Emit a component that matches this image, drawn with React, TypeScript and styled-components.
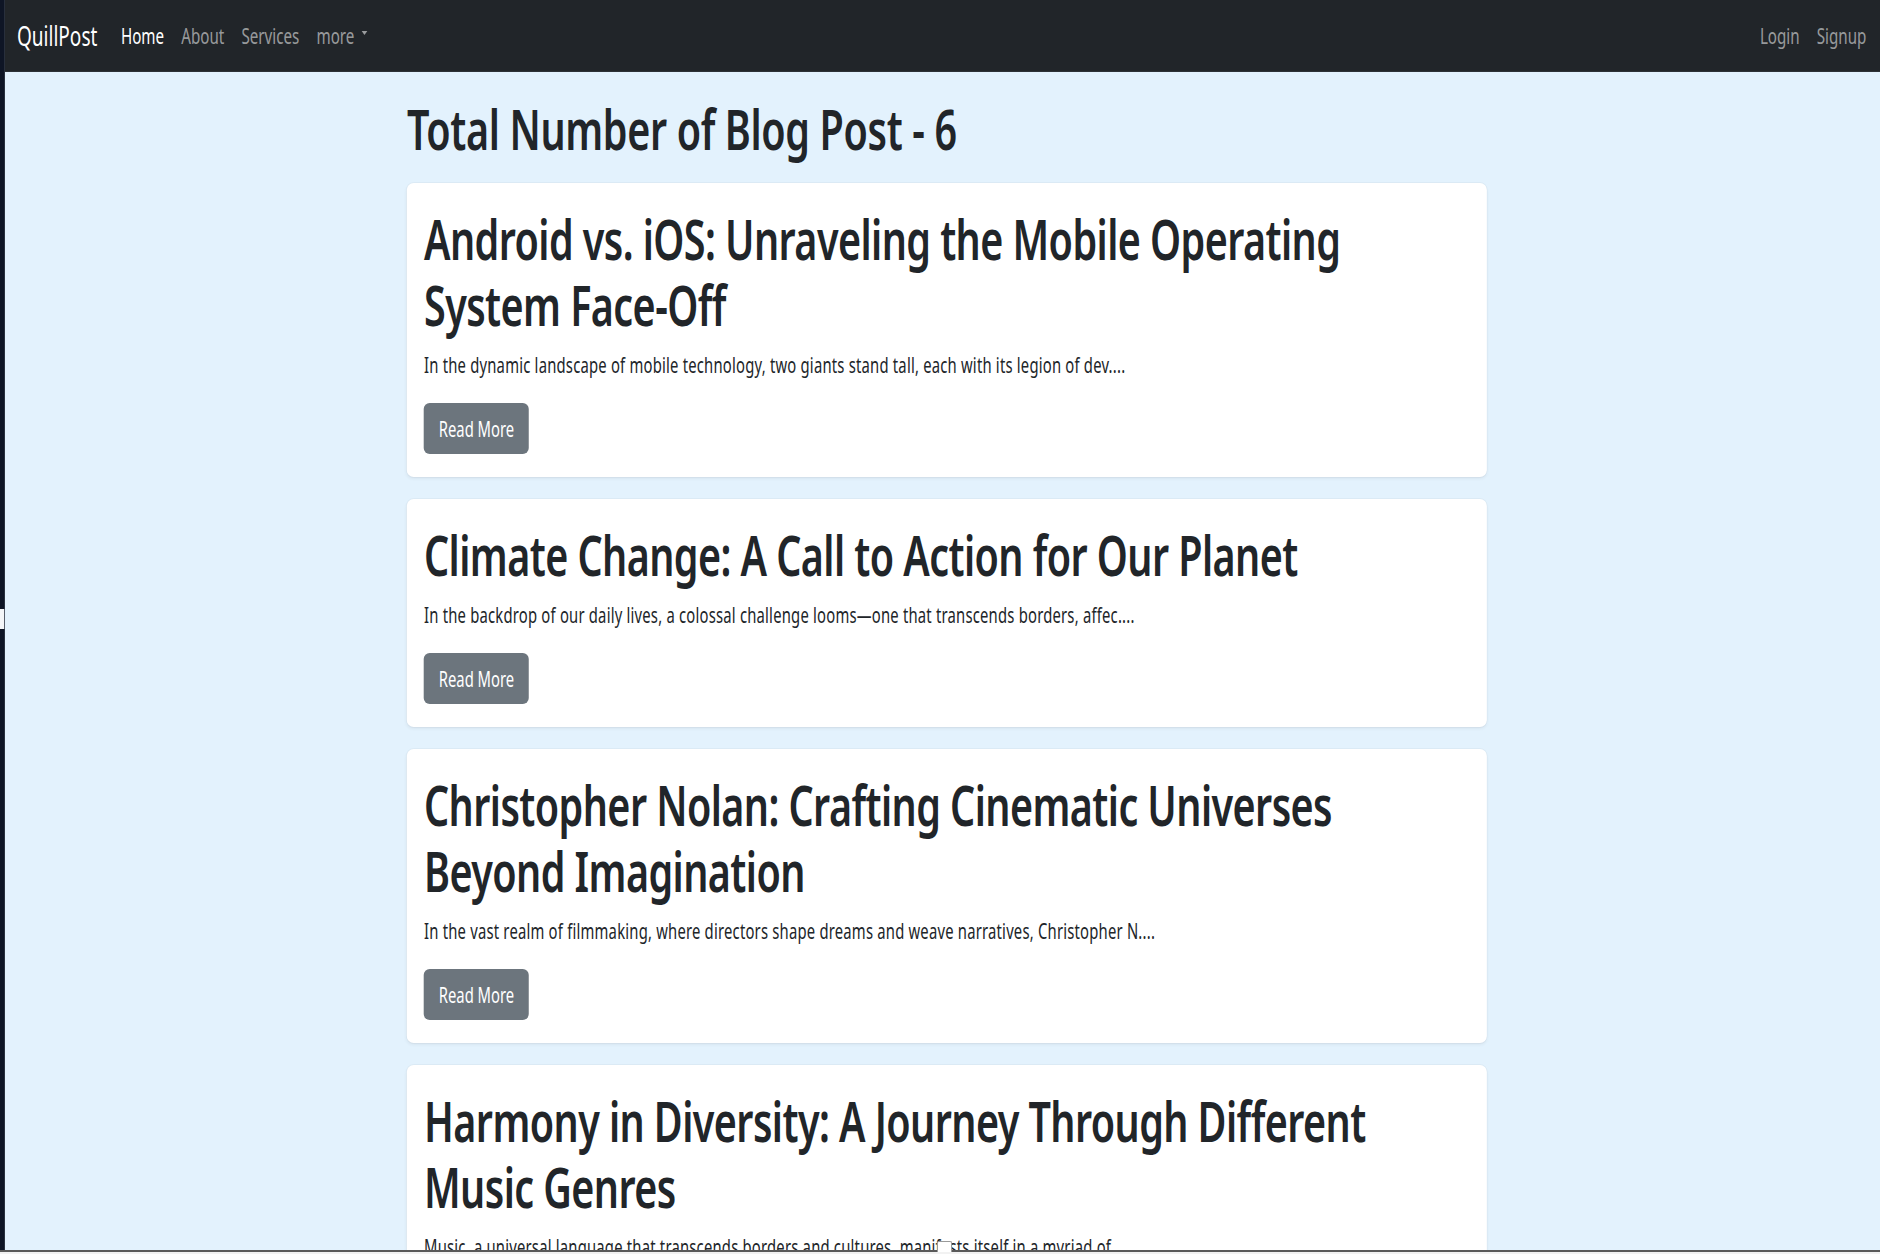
import React from "react";
import styled, { createGlobalStyle } from "styled-components";

/* The reference is a horizontally condensed rendering of the page:
   the page is laid out in a wider coordinate space and squeezed on X. */
const SQUEEZE = 0.705;
const x = (n: number) => `${(n / SQUEEZE).toFixed(2)}px`;

const GlobalStyle = createGlobalStyle`
  html, body {
    margin: 0;
    padding: 0;
    background: #e3f2fd;
    overflow: hidden;
  }
  body {
    font-family: "Noto Sans", "Open Sans", sans-serif;
    color: #212529;
  }
  * { box-sizing: border-box; }
`;

const Viewport = styled.div`
  width: ${x(1880)};
  transform: scaleX(${SQUEEZE});
  transform-origin: 0 0;
`;

const Frame = styled.div`
  display: flex;
  min-height: 1254px;
`;

const EdgeStrip = styled.div`
  width: ${x(5)};
  flex-shrink: 0;
  background: #0e1525;
  display: flex;
  flex-direction: column;
  padding-top: 609px;
`;

const EdgeTick = styled.div`
  width: ${x(4)};
  height: 20px;
  background: #f4f6f8;
`;

const Screen = styled.div`
  flex: 1;
  display: flex;
  flex-direction: column;
  background: #e3f2fd;
`;

const NavBar = styled.nav`
  height: 72px;
  background: #212529;
  display: flex;
  align-items: center;
  padding: 0 ${x(5)} 0 ${x(12)};
  border-bottom: 1px solid #2c3136;
`;

const Brand = styled.a`
  font-size: 27px;
  color: #fff;
  text-decoration: none;
  margin-right: ${x(15)};
`;

const NavList = styled.ul`
  display: flex;
  align-items: center;
  list-style: none;
  margin: 0;
  padding: 0;
`;

const RightList = styled(NavList)`
  margin-left: auto;
`;

const NavLink = styled.a<{ $active?: boolean }>`
  display: flex;
  align-items: center;
  gap: ${x(7)};
  padding: 0 ${x(8.6)};
  font-size: 21.5px;
  color: ${(p) => (p.$active ? "#ffffff" : "rgba(255,255,255,0.55)")};
  text-decoration: none;
`;

const Caret = styled.span`
  width: 0;
  height: 0;
  border-left: ${x(3.5)} solid transparent;
  border-right: ${x(3.5)} solid transparent;
  border-top: 4px solid currentColor;
  margin-top: -6px;
`;

const Main = styled.main`
  padding-left: ${x(9)};
`;

const Container = styled.div`
  width: ${x(1080)};
  margin: 0 auto;
  padding-top: 23px;
  display: flex;
  flex-direction: column;
  gap: 22px;
`;

const PageTitle = styled.h1`
  margin: 0;
  font-size: 56px;
  line-height: 66px;
  font-weight: 600;
  letter-spacing: -0.5px;
  color: #212529;
`;

const Card = styled.article`
  background: #fff;
  border-radius: ${x(7)} / 7px;
  box-shadow: 0 0 0 1px rgba(0, 0, 0, 0.03), 0 2px 4px rgba(0, 0, 0, 0.05);
  padding: 22px ${x(17)} 23px;
  display: flex;
  flex-direction: column;
  align-items: flex-start;
`;

const CardTitle = styled.h2`
  margin: 0;
  font-size: 56px;
  line-height: 66px;
  font-weight: 600;
  letter-spacing: -0.8px;
  color: #212529;
  max-width: ${x(975)};
`;

const Excerpt = styled.p`
  margin: 13px 0 23px;
  font-size: 21px;
  line-height: 30px;
  letter-spacing: 0.3px;
  color: #212529;
`;

const ReadMore = styled.a`
  display: inline-flex;
  align-items: center;
  justify-content: center;
  width: ${x(105)};
  height: 51px;
  border-radius: ${x(6)} / 6px;
  background: #6c757d;
  color: #fff;
  font-size: 21px;
  text-decoration: none;
  white-space: nowrap;
`;

const BottomEdge = styled.div`
  position: fixed;
  left: 0;
  right: 0;
  bottom: 0;
  height: 4px;
  background: #f2f2f2;
  border-top: 2px solid #5a5a5a;
`;

const Grip = styled.div`
  position: fixed;
  left: 937px;
  bottom: 2px;
  width: 15px;
  height: 11px;
  background: #fff;
  border: 1px solid #9a9a9a;
  border-bottom: none;
  border-radius: 2px 2px 0 0;
`;

const posts = [
  {
    title: "Android vs. iOS: Unraveling the Mobile Operating System Face-Off",
    excerpt:
      "In the dynamic landscape of mobile technology, two giants stand tall, each with its legion of dev....",
  },
  {
    title: "Climate Change: A Call to Action for Our Planet",
    excerpt:
      "In the backdrop of our daily lives, a colossal challenge looms\u2014one that transcends borders, affec....",
  },
  {
    title: "Christopher Nolan: Crafting Cinematic Universes Beyond Imagination",
    excerpt:
      "In the vast realm of filmmaking, where directors shape dreams and weave narratives, Christopher N....",
  },
  {
    title: "Harmony in Diversity: A Journey Through Different Music Genres",
    excerpt:
      "Music, a universal language that transcends borders and cultures, manifests itself in a myriad of....",
  },
  {
    title: "The Art of Mindful Living",
    excerpt: "In a world that moves at breakneck speed, mindfulness offers....",
  },
  {
    title: "Exploring the Cosmos",
    excerpt: "From distant galaxies to the planets next door, the universe....",
  },
];

export default function App() {
  return (
    <>
      <GlobalStyle />
      <Viewport>
        <Frame>
          <EdgeStrip>
            <EdgeTick />
          </EdgeStrip>
          <Screen>
            <NavBar>
              <Brand href="#">QuillPost</Brand>
              <NavList>
                <li>
                  <NavLink href="#" $active>
                    Home
                  </NavLink>
                </li>
                <li>
                  <NavLink href="#">About</NavLink>
                </li>
                <li>
                  <NavLink href="#">Services</NavLink>
                </li>
                <li>
                  <NavLink href="#">
                    more
                    <Caret />
                  </NavLink>
                </li>
              </NavList>
              <RightList>
                <li>
                  <NavLink href="#">Login</NavLink>
                </li>
                <li>
                  <NavLink href="#">Signup</NavLink>
                </li>
              </RightList>
            </NavBar>
            <Main>
              <Container>
                <PageTitle>Total Number of Blog Post - {posts.length}</PageTitle>
                {posts.map((p) => (
                  <Card key={p.title}>
                    <CardTitle>{p.title}</CardTitle>
                    <Excerpt>{p.excerpt}</Excerpt>
                    <ReadMore href="#">Read More</ReadMore>
                  </Card>
                ))}
              </Container>
            </Main>
          </Screen>
        </Frame>
      </Viewport>
      <BottomEdge />
      <Grip />
    </>
  );
}
